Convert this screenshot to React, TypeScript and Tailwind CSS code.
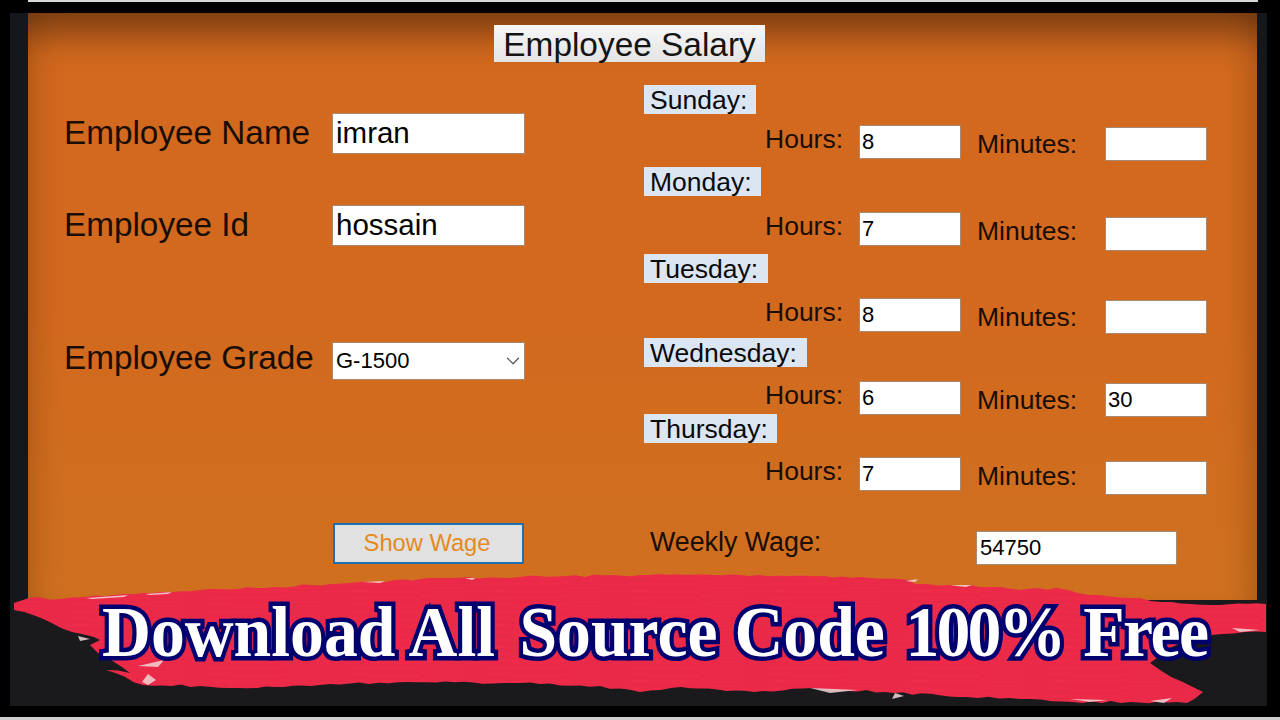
import { ChevronDown } from 'lucide-react'

const days = [
  { name: 'Sunday:', labelCls: 'mt-0 w-[112px]', rowCls: 'mt-[11px]', minCls: 'mt-[2px]', labelTextCls: 'mt-[1px]', minTextCls: 'mt-[6px]', hours: '8', minutes: '' },
  { name: 'Monday:', labelCls: 'mt-[9px] w-[117px]', rowCls: 'mt-[16px]', minCls: 'mt-[5px]', labelTextCls: 'mt-[1px]', minTextCls: 'mt-[6px]', hours: '7', minutes: '' },
  { name: 'Tuesday:', labelCls: 'mt-[9px] w-[124px]', rowCls: 'mt-[15px]', minCls: 'mt-[2px]', labelTextCls: 'mt-[1px]', minTextCls: 'mt-[6px]', hours: '8', minutes: '' },
  { name: 'Wednesday:', labelCls: 'mt-[7px] w-[163px]', rowCls: 'mt-[14px]', minCls: 'mt-[2px]', labelTextCls: 'mt-[1px]', minTextCls: 'mt-[6px]', hours: '6', minutes: '30' },
  { name: 'Thursday:', labelCls: 'mt-0 w-[133px]', rowCls: 'mt-[14px]', minCls: 'mt-[4px]', labelTextCls: 'mt-[1px]', minTextCls: 'mt-[6px]', hours: '7', minutes: '' },
]

// outline of the paint stroke, y is relative to the top of the banner
const outline: [number, number][] = [
  [14, 33], [29, 28], [60, 29], [86, 27], [143, 23], [200, 20], [257, 18], [330, 14], [359, 12], [449, 8],
  [520, 7], [640, 5], [740, 5], [824, 6], [870, 8], [909, 10], [915, 14], [950, 15], [991, 17], [1020, 20],
  [1056, 18], [1089, 25], [1130, 28], [1171, 32], [1220, 35], [1266, 34], [1266, 62], [1245, 62], [1211, 65],
  [1190, 70], [1165, 80], [1150, 93], [1160, 100], [1171, 107], [1203, 122], [1187, 133], [1130, 132],
  [1073, 132], [1020, 129], [967, 127], [885, 122], [811, 118], [754, 122], [681, 117], [640, 122], [600, 116],
  [520, 113], [408, 112], [320, 115], [257, 118], [200, 116], [143, 115], [106, 100], [130, 103], [98, 83],
  [90, 75], [100, 70], [94, 67], [61, 58], [33, 45], [14, 40],
]

// breaks the long edges up so they look like a dry brush
function roughPath(points: [number, number][]) {
  let seed = 7
  const next = () => {
    seed = (seed * 16807) % 2147483647
    return seed / 2147483647 - 0.5
  }
  let d = ''
  points.forEach(([x, y], i) => {
    d += `${i === 0 ? 'M' : 'L'}${x} ${y} `
    const [nx, ny] = points[(i + 1) % points.length]
    const steps = Math.floor(Math.hypot(nx - x, ny - y) / 9)
    for (let s = 1; s < steps; s++) {
      const t = s / steps
      d += `L${(x + (nx - x) * t).toFixed(1)} ${(y + (ny - y) * t + next() * 2.4).toFixed(1)} `
    }
  })
  return d + 'Z'
}

function Box({ value, className }: { value: string; className: string }) {
  return (
    <div className={`bg-white border border-[#a88a72] text-black flex items-center shrink-0 ${className}`}>
      {value}
    </div>
  )
}

function Brush() {
  const paint = roughPath(outline)
  return (
    <svg viewBox="0 0 1280 150" className="w-[1280px] h-[150px]">
      <defs>
        <pattern id="streaks" width="140" height="7" patternUnits="userSpaceOnUse">
          <path d="M0 2 H90 M40 4 H140 M10 6 H70" stroke="#cf2440" strokeWidth="0.7" opacity="0.55" />
        </pattern>
        <clipPath id="paintClip">
          <path d={paint} />
        </clipPath>
      </defs>
      <path fill="#ee2a49" d={paint} />
      <rect width="1280" height="150" fill="url(#streaks)" clipPath="url(#paintClip)" />
      <g fill="#f3d5d8" opacity="0.85">
        <path d="M86 28 L128 25 L124 27 L92 29 Z" />
        <path d="M145 24 L172 22 L168 24 L150 25 Z" />
        <path d="M362 12 L385 11 L380 13 Z" />
        <path d="M465 8 L476 8 L472 10 Z" />
        <path d="M905 11 L918 9 L915 12 Z" />
        <path d="M950 15 L972 15 L966 17 Z" />
        <path d="M78 66 L90 69 L80 71 Z" />
        <path d="M138 96 L164 90 L158 97 Z" />
        <path d="M148 104 L156 110 L148 115 L142 112 Z" />
        <path d="M810 118 L858 120 L830 123 Z" />
        <path d="M895 123 L904 126 L892 129 Z" />
        <path d="M1070 129 L1108 130 L1090 132 Z" />
        <path d="M1150 131 L1172 128 L1164 133 Z" />
        <path d="M1232 58 L1260 60 L1240 62 Z" />
      </g>
    </svg>
  )
}

export default function App() {
  return (
    <div className="relative w-[1280px] h-[720px] bg-black overflow-hidden font-['Liberation_Sans',Arial,sans-serif] text-[#1a0d05]">
      {/* Strip of the window behind */}
      <div className="ml-[28px] w-[1230px] h-[2px] bg-[#d8d8dc]" />

      <div className="mt-[11px] ml-[10px] w-[1257px] bg-[#14171c]">
        {/* The form */}
        <div className="ml-[18px] w-[1229px] h-[587px] bg-linear-to-b from-[#d2691e] from-50% to-[#cf701f] shadow-[inset_0_45px_35px_-25px_rgba(0,0,0,0.42),inset_30px_0_30px_-22px_rgba(0,0,0,0.14),inset_-30px_0_30px_-22px_rgba(0,0,0,0.16)] flex">
          <div className="w-[616px] shrink-0 pl-[36px] flex flex-col">
            <div className="mt-[100px] h-[40px] flex items-start">
              <span className="w-[268px] text-[33.3px] leading-[40px]">Employee Name</span>
              <Box value="imran" className="w-[193px] h-[41px] text-[29.5px] pl-[3px]" />
            </div>
            <div className="mt-[52px] h-[40px] flex items-start">
              <span className="w-[268px] text-[33.3px] leading-[40px]">Employee Id</span>
              <Box value="hossain" className="w-[193px] h-[41px] text-[29.5px] pl-[3px]" />
            </div>
            <div className="mt-[97px] h-[37px] flex items-start">
              <span className="w-[268px] text-[33.3px] leading-[32px]">Employee Grade</span>
              <div className="w-[193px] h-[38px] bg-white border border-[#a88a72] text-black flex items-center justify-between text-[22px] pl-[3px] pb-[2px]">
                G-1500
                <ChevronDown size={22} strokeWidth={1.3} className="text-[#555] mt-[2px]" />
              </div>
            </div>
            <button className="mt-[144px] ml-[269px] w-[191px] h-[41px] pr-[3px] bg-[#e1e1e1] border-2 border-[#1e6fb4] text-[#e58a1f] text-[23.7px]">
              Show Wage
            </button>
          </div>

          <div className="flex-1 flex flex-col relative">
            <div className="absolute left-[-150px] top-[12px] w-[271px] h-[37px] bg-linear-to-b from-[#f6f6f6] to-[#e4e4e4] text-[#141414] text-[33.4px] leading-[39px] text-center">
              Employee Salary
            </div>
            <div className="mt-[72px]">
              {days.map((d) => (
                <div key={d.name}>
                  <div className={`h-[29px] bg-[#dce6f2] text-[#0a0a0a] text-[26.5px] leading-[31px] pl-[6px] ${d.labelCls}`}>
                    {d.name}
                  </div>
                  <div className={`flex items-start h-[33px] ${d.rowCls}`}>
                    <span className={`ml-[121px] w-[94px] text-[26.5px] leading-[26px] shrink-0 ${d.labelTextCls}`}>Hours:</span>
                    <Box value={d.hours} className="w-[102px] h-[34px] text-[22px] pl-[2px] pb-[2px]" />
                    <span className={`ml-[16px] w-[128px] text-[26.5px] leading-[26px] shrink-0 ${d.minTextCls}`}>Minutes:</span>
                    <Box value={d.minutes} className={`w-[102px] h-[34px] text-[22px] pl-[2px] pb-[2px] ${d.minCls}`} />
                  </div>
                </div>
              ))}
              <div className="mt-[38px] flex items-start">
                <span className="ml-[6px] w-[326px] text-[26.8px] leading-[28px]">Weekly Wage:</span>
                <Box value="54750" className="mt-[3px] w-[201px] h-[34px] text-[22px] pl-[3px] pb-[2px]" />
              </div>
            </div>
          </div>
        </div>
        <div className="h-[106px] bg-[#1a1a1d]" />
      </div>

      <div className="mt-[11px] h-[3px] bg-[#cfcfcf]" />

      {/* Paint stroke with the caption, lies over the form */}
      <div className="absolute left-0 top-[570px] w-[1280px] h-[150px]">
        <Brush />
        <div className="absolute left-[102px] top-[22px] origin-left scale-x-[0.94] whitespace-nowrap font-['Liberation_Serif','Times_New_Roman',serif] font-bold text-[72px] leading-[80px] text-white [-webkit-text-stroke:9px_#00006f] [paint-order:stroke_fill]">
          Download All <span className="ml-[8px]">Source Code</span> <span className="ml-[4px] tracking-[-3px]">100%</span>{' '}
          <span className="ml-[3px] tracking-[-1.5px]">Free</span>
        </div>
      </div>
    </div>
  )
}
